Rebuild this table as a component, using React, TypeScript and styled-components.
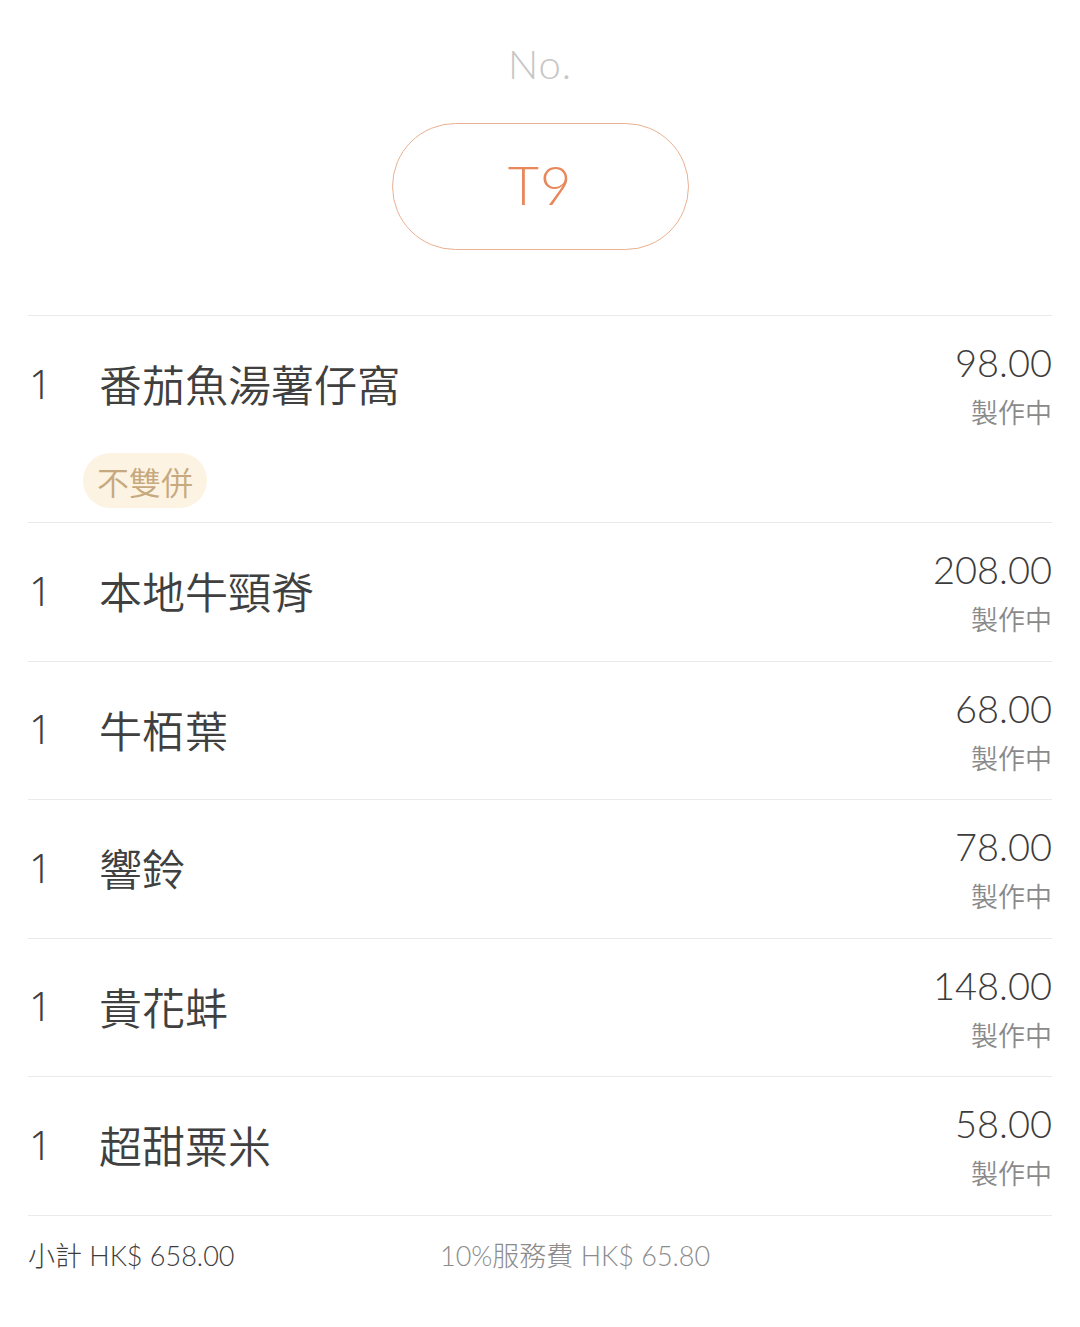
import React from "react";
import styled, { createGlobalStyle } from "styled-components";

const Global = createGlobalStyle`
  html, body { margin: 0; padding: 0; background: #fff; }
  body { font-family: Lato, "Noto Sans CJK TC", sans-serif; -webkit-font-smoothing: antialiased; }
`;

const Page = styled.div`
  width: 1080px;
  box-sizing: border-box;
  padding: 0 28px;
  display: flex;
  flex-direction: column;
`;

const Header = styled.div`
  display: flex;
  flex-direction: column;
  align-items: center;
  padding-top: 38px;
  padding-bottom: 65px;
`;

const NoLabel = styled.div`
  font-size: 40px;
  line-height: 52px;
  color: #c6c6c6;
  font-weight: 300;
  letter-spacing: 1px;
`;

const TablePill = styled.div`
  margin-top: 33px;
  width: 297px;
  height: 127px;
  box-sizing: border-box;
  border: 1.5px solid #eab092;
  border-radius: 64px;
  display: flex;
  align-items: center;
  justify-content: center;
  font-size: 54px;
  font-weight: 300;
  color: #e8875a;
  letter-spacing: 1px;
  padding-bottom: 4px;
`;

const List = styled.div`
  display: flex;
  flex-direction: column;
  border-top: 1px solid #eaeaea;
`;

const Row = styled.div`
  display: flex;
  align-items: flex-start;
  padding: 22px 0 14px;
  border-bottom: 1px solid #eaeaea;
`;

const Left = styled.div`
  flex: 1;
  display: flex;
  flex-direction: column;
  padding-top: 17px;
`;

const NameLine = styled.div`
  display: flex;
  align-items: center;
  height: 56px;
`;

const Qty = styled.div`
  width: 73px;
  font-family: "Noto Sans", sans-serif;
  font-size: 40px;
  font-weight: 300;
  color: #3f3f3f;
  padding-left: 1px;
  box-sizing: border-box;
`;

const Name = styled.div`
  font-family: "Noto Sans CJK TC", sans-serif;
  font-size: 43px;
  font-weight: 350;
  color: #404040;
  margin-left: -2px;
`;

const Tag = styled.div`
  align-self: flex-start;
  margin-top: 42px;
  margin-left: 55px;
  height: 55px;
  padding: 0 14px;
  border-radius: 28px;
  background: #fdf3e2;
  display: flex;
  align-items: center;
  font-family: "Noto Sans CJK TC", sans-serif;
  font-size: 32px;
  font-weight: 350;
  color: #c6a97e;
`;

const Right = styled.div`
  display: flex;
  flex-direction: column;
  align-items: flex-end;
  padding-bottom: 7.5px;
`;

const Price = styled.div`
  font-size: 38px;
  line-height: 48px;
  font-weight: 300;
  color: #3c3c3c;
`;

const Status = styled.div`
  margin-top: 6px;
  font-family: "Noto Sans CJK TC", sans-serif;
  font-size: 27px;
  font-weight: 350;
  line-height: 40px;
  color: #8a8a8a;
`;

const Footer = styled.div`
  display: flex;
  align-items: center;
  padding-top: 22px;
  height: 36px;
  box-sizing: content-box;
`;

const FooterText = styled.div<{ $muted?: boolean; $w?: number }>`
  font-size: 27px;
  line-height: 36px;
  font-weight: 300;
  color: ${(p) => (p.$muted ? "#8c8c8c" : "#3c3c3c")};
  width: ${(p) => (p.$w ? `${p.$w}px` : "auto")};
  white-space: nowrap;
`;

const items = [
  { qty: 1, name: "番茄魚湯薯仔窩", price: "98.00", tag: "不雙併" },
  { qty: 1, name: "本地牛頸脊", price: "208.00" },
  { qty: 1, name: "牛栢葉", price: "68.00" },
  { qty: 1, name: "響鈴", price: "78.00" },
  { qty: 1, name: "貴花蚌", price: "148.00" },
  { qty: 1, name: "超甜粟米", price: "58.00" },
];

export default function App() {
  return (
    <>
      <Global />
      <Page>
        <Header>
          <NoLabel>No.</NoLabel>
          <TablePill>T9</TablePill>
        </Header>
        <List>
          {items.map((it, i) => (
            <Row key={i}>
              <Left>
                <NameLine>
                  <Qty>{it.qty}</Qty>
                  <Name>{it.name}</Name>
                </NameLine>
                {it.tag && <Tag>{it.tag}</Tag>}
              </Left>
              <Right>
                <Price>{it.price}</Price>
                <Status>製作中</Status>
              </Right>
            </Row>
          ))}
        </List>
        <Footer>
          <FooterText $w={412}>小計 HK$ 658.00</FooterText>
          <FooterText $muted>10%服務費 HK$ 65.80</FooterText>
        </Footer>
      </Page>
    </>
  );
}
